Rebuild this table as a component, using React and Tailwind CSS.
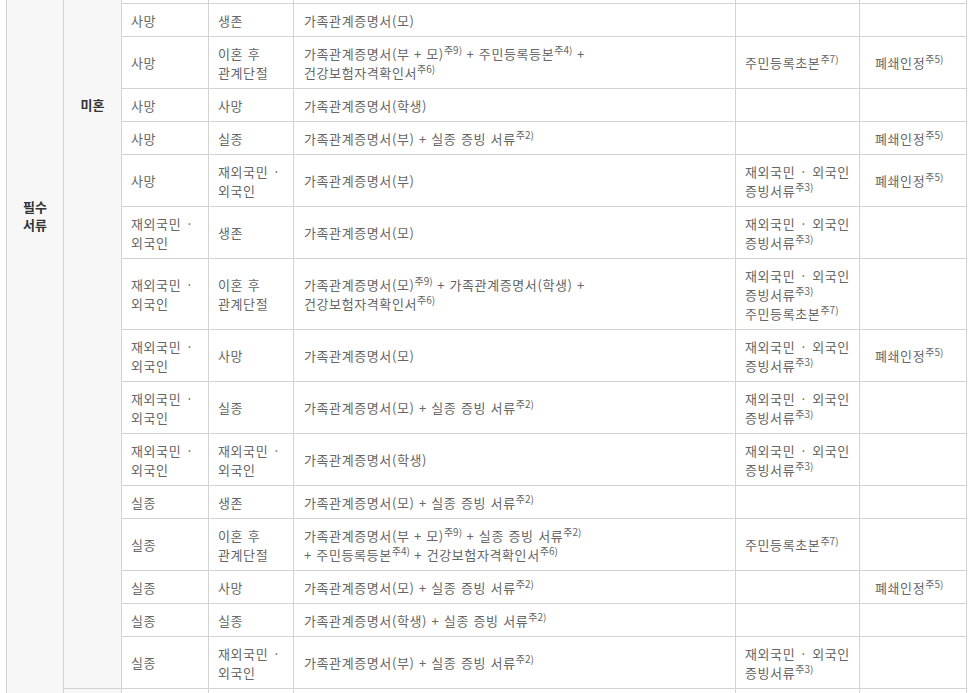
import React from "react";

// 주석 번호 위첨자
const N = ({ n }) => <sup className="text-[10px] tracking-normal">주{n})</sup>;

const FOREIGN = "재외국민 ·";
const FOREIGN_DOC = (
  <>
    재외국민 · 외국인
    <br />
    증빙서류
    <N n={3} />
  </>
);
const CLOSED = (
  <>
    폐쇄인정
    <N n={5} />
  </>
);
const MISSING = (
  <>
    {" "}+ 실종 증빙 서류
    <N n={2} />
  </>
);

const twoLine = (a, b) => (
  <>
    {a}
    <br />
    {b}
  </>
);

const rows = [
  { a: "사망", b: "생존", c: "가족관계증명서(모)" },
  {
    a: "사망",
    b: twoLine("이혼 후", "관계단절"),
    c: (
      <>
        가족관계증명서(부 + 모)<N n={9} /> + 주민등록등본<N n={4} /> +
        <br />
        건강보험자격확인서<N n={6} />
      </>
    ),
    d: (
      <>
        주민등록초본<N n={7} />
      </>
    ),
    e: CLOSED,
  },
  { a: "사망", b: "사망", c: "가족관계증명서(학생)" },
  { a: "사망", b: "실종", c: <>가족관계증명서(부){MISSING}</>, e: CLOSED },
  {
    a: "사망",
    b: twoLine(FOREIGN, "외국인"),
    c: "가족관계증명서(부)",
    d: FOREIGN_DOC,
    e: CLOSED,
  },
  { a: twoLine(FOREIGN, "외국인"), b: "생존", c: "가족관계증명서(모)", d: FOREIGN_DOC },
  {
    a: twoLine(FOREIGN, "외국인"),
    b: twoLine("이혼 후", "관계단절"),
    c: (
      <>
        가족관계증명서(모)<N n={9} /> + 가족관계증명서(학생) +
        <br />
        건강보험자격확인서<N n={6} />
      </>
    ),
    d: (
      <>
        {FOREIGN_DOC}
        <br />
        주민등록초본<N n={7} />
      </>
    ),
  },
  { a: twoLine(FOREIGN, "외국인"), b: "사망", c: "가족관계증명서(모)", d: FOREIGN_DOC, e: CLOSED },
  { a: twoLine(FOREIGN, "외국인"), b: "실종", c: <>가족관계증명서(모){MISSING}</>, d: FOREIGN_DOC },
  {
    a: twoLine(FOREIGN, "외국인"),
    b: twoLine(FOREIGN, "외국인"),
    c: "가족관계증명서(학생)",
    d: FOREIGN_DOC,
  },
  { a: "실종", b: "생존", c: <>가족관계증명서(모){MISSING}</> },
  {
    a: "실종",
    b: twoLine("이혼 후", "관계단절"),
    c: (
      <>
        가족관계증명서(부 + 모)<N n={9} /> + 실종 증빙 서류<N n={2} />
        <br />+ 주민등록등본<N n={4} /> + 건강보험자격확인서<N n={6} />
      </>
    ),
    d: (
      <>
        주민등록초본<N n={7} />
      </>
    ),
  },
  { a: "실종", b: "사망", c: <>가족관계증명서(모){MISSING}</>, e: CLOSED },
  { a: "실종", b: "실종", c: <>가족관계증명서(학생){MISSING}</> },
  {
    a: "실종",
    b: twoLine(FOREIGN, "외국인"),
    c: <>가족관계증명서(부){MISSING}</>,
    d: FOREIGN_DOC,
  },
];

const td = "border border-[#d3d3d3] pl-[9px] pr-[6px] pt-[7px] pb-[6px] align-middle";
const edge = "border border-t-0 border-[#d3d3d3] p-0";

export default function App() {
  return (
    <div
      className="bg-white h-[693px] overflow-hidden pl-[6px] text-[13px] leading-[19px] text-[#666] tracking-[0.6px] [word-spacing:1px]"
      style={{ fontFamily: '"Noto Sans CJK KR", "Noto Sans", sans-serif' }}
    >
      <table className="w-[960px] table-fixed border-collapse">
        <colgroup>
          <col className="w-[57px]" />
          <col className="w-[58px]" />
          <col className="w-[87px]" />
          <col className="w-[85px]" />
          <col className="w-[442px]" />
          <col className="w-[124px]" />
          <col className="w-[107px]" />
        </colgroup>
        <tbody>
          {/* 위에서 잘린 이전 행 */}
          <tr className="h-[3px]">
            <td
              rowSpan={18}
              className="border border-t-0 border-[#d3d3d3] bg-[#f7f7f7] align-top text-center font-bold text-[#333] pt-[198px] leading-[18px] tracking-normal"
            >
              필수
              <br />
              서류
            </td>
            <td
              rowSpan={16}
              className="border border-t-0 border-[#d3d3d3] bg-[#f7f7f7] align-top text-center font-bold text-[#333] pt-[95px] tracking-normal"
            >
              미혼
            </td>
            <td className={edge} />
            <td className={edge} />
            <td className={edge} />
            <td className={edge} />
            <td className={edge} />
          </tr>

          {rows.map((r, i) => (
            <tr key={i}>
              <td className={td}>{r.a}</td>
              <td className={td}>{r.b}</td>
              <td className={td + " pl-[10px]"}>{r.c}</td>
              <td className={td}>{r.d}</td>
              <td className={td + " pl-[15px]"}>{r.e}</td>
            </tr>
          ))}

          {/* 다음 구분 (화면 아래로 잘림) */}
          <tr className="h-[20px]">
            <td className="border border-[#d3d3d3] bg-[#f7f7f7]" />
            <td className="border border-[#d3d3d3]" />
            <td className="border border-[#d3d3d3]" />
            <td className="border border-[#d3d3d3]" />
            <td className="border border-[#d3d3d3]" />
            <td className="border border-[#d3d3d3]" />
          </tr>
        </tbody>
      </table>
    </div>
  );
}
